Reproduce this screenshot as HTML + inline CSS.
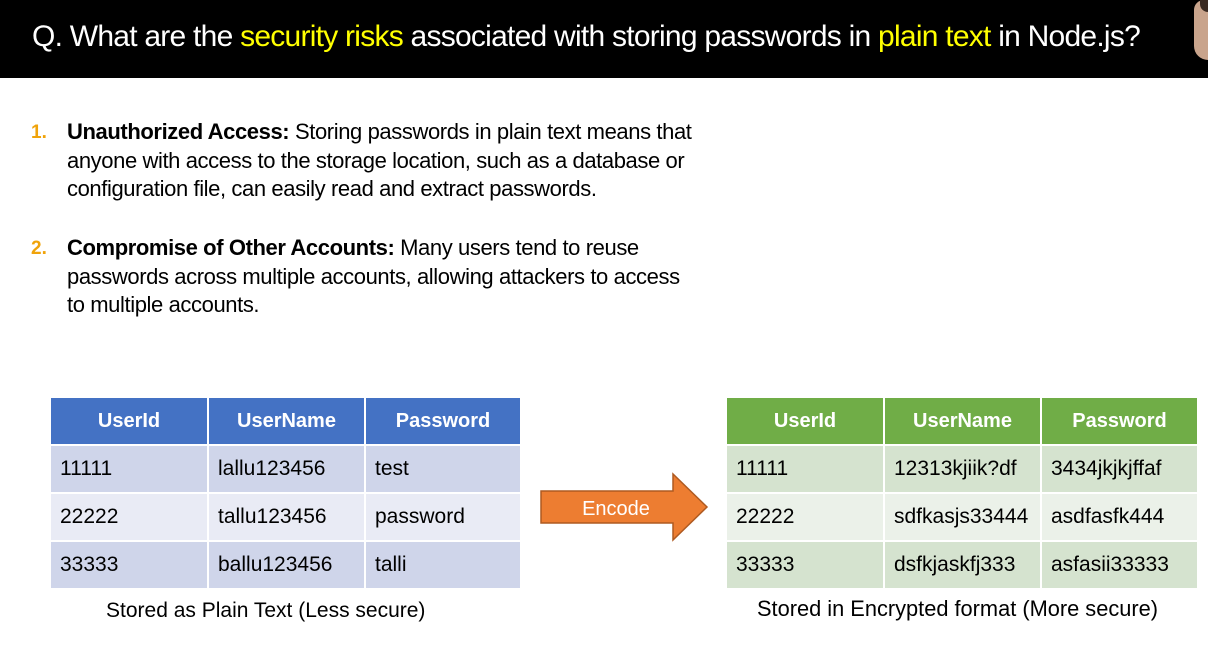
<!DOCTYPE html>
<html><head><style>
body{margin:0;width:1208px;height:651px;background:#fff;position:relative;overflow:hidden;font-family:"Liberation Sans",sans-serif;}
.bar{position:absolute;left:0;top:0;width:1208px;height:78px;background:#000;}
.title{position:absolute;left:32px;top:20px;color:#fff;font-size:30px;letter-spacing:-0.75px;white-space:nowrap;}
.y{color:#ffff00}
.item{position:absolute;left:67px;font-size:22px;line-height:28.5px;color:#000;letter-spacing:-0.4px;white-space:nowrap;}
.num{position:absolute;left:31px;font-size:19px;color:#f0a30a;font-weight:bold;}
.c{position:absolute;height:46px;line-height:46px;font-size:21px;padding-left:9px;box-sizing:border-box;white-space:nowrap;}
.h{color:#fff;font-weight:bold;text-align:center;padding:0;font-size:20px;}
.cap{position:absolute;white-space:nowrap;}
</style></head><body>
<div class="bar"></div>
<div class="title">Q. What are the <span class="y">security risks</span> associated with storing passwords in <span class="y">plain text</span> in Node.js?</div>
<div style="position:absolute;left:1194px;top:0;width:20px;height:60px;background:#c9a48c;border-radius:10px 0 0 14px;"></div>
<div style="position:absolute;left:1200px;top:0;width:12px;height:12px;background:#3a2a22;border-radius:0 0 0 8px;"></div>

<div class="num" style="top:122px">1.</div>
<div class="item" style="top:118px"><b>Unauthorized Access:</b> Storing passwords in plain text means that<br>anyone with access to the storage location, such as a database or<br>configuration file, can easily read and extract passwords.</div>
<div class="num" style="top:238px">2.</div>
<div class="item" style="top:234px"><b>Compromise of Other Accounts:</b> Many users tend to reuse<br>passwords across multiple accounts, allowing attackers to access<br>to multiple accounts.</div>

<div class="c h" style="left:51px;top:398px;width:156px;background:#4472c4">UserId</div>
<div class="c h" style="left:209px;top:398px;width:155px;background:#4472c4">UserName</div>
<div class="c h" style="left:366px;top:398px;width:154px;background:#4472c4">Password</div>
<div class="c" style="left:51px;top:446px;width:156px;background:#cfd5ea">11111</div>
<div class="c" style="left:209px;top:446px;width:155px;background:#cfd5ea">lallu123456</div>
<div class="c" style="left:366px;top:446px;width:154px;background:#cfd5ea">test</div>
<div class="c" style="left:51px;top:494px;width:156px;background:#e9ebf5">22222</div>
<div class="c" style="left:209px;top:494px;width:155px;background:#e9ebf5">tallu123456</div>
<div class="c" style="left:366px;top:494px;width:154px;background:#e9ebf5">password</div>
<div class="c" style="left:51px;top:542px;width:156px;background:#cfd5ea">33333</div>
<div class="c" style="left:209px;top:542px;width:155px;background:#cfd5ea">ballu123456</div>
<div class="c" style="left:366px;top:542px;width:154px;background:#cfd5ea">talli</div>
<div class="cap" style="left:106px;top:599px;font-size:21px">Stored as Plain Text (Less secure)</div>

<svg style="position:absolute;left:538px;top:472px" width="172" height="70"><polygon points="3,19 135,19 135,2 169,35 135,68 135,51 3,51" fill="#ed7d31" stroke="#ae5a21" stroke-width="1.5"/><text x="78" y="43" font-size="20" fill="#fff" text-anchor="middle" font-family="Liberation Sans">Encode</text></svg>

<div class="c h" style="left:727px;top:398px;width:156px;background:#70ad47">UserId</div>
<div class="c h" style="left:885px;top:398px;width:155px;background:#70ad47">UserName</div>
<div class="c h" style="left:1042px;top:398px;width:155px;background:#70ad47">Password</div>
<div class="c" style="left:727px;top:446px;width:156px;background:#d5e3cf">11111</div>
<div class="c" style="left:885px;top:446px;width:155px;background:#d5e3cf">12313kjiik?df</div>
<div class="c" style="left:1042px;top:446px;width:155px;background:#d5e3cf">3434jkjkjffaf</div>
<div class="c" style="left:727px;top:494px;width:156px;background:#ebf1e9">22222</div>
<div class="c" style="left:885px;top:494px;width:155px;background:#ebf1e9">sdfkasjs33444</div>
<div class="c" style="left:1042px;top:494px;width:155px;background:#ebf1e9">asdfasfk444</div>
<div class="c" style="left:727px;top:542px;width:156px;background:#d5e3cf">33333</div>
<div class="c" style="left:885px;top:542px;width:155px;background:#d5e3cf">dsfkjaskfj333</div>
<div class="c" style="left:1042px;top:542px;width:155px;background:#d5e3cf">asfasii33333</div>
<div class="cap" style="left:757px;top:596px;font-size:21.8px">Stored in Encrypted format (More secure)</div>
</body></html>
